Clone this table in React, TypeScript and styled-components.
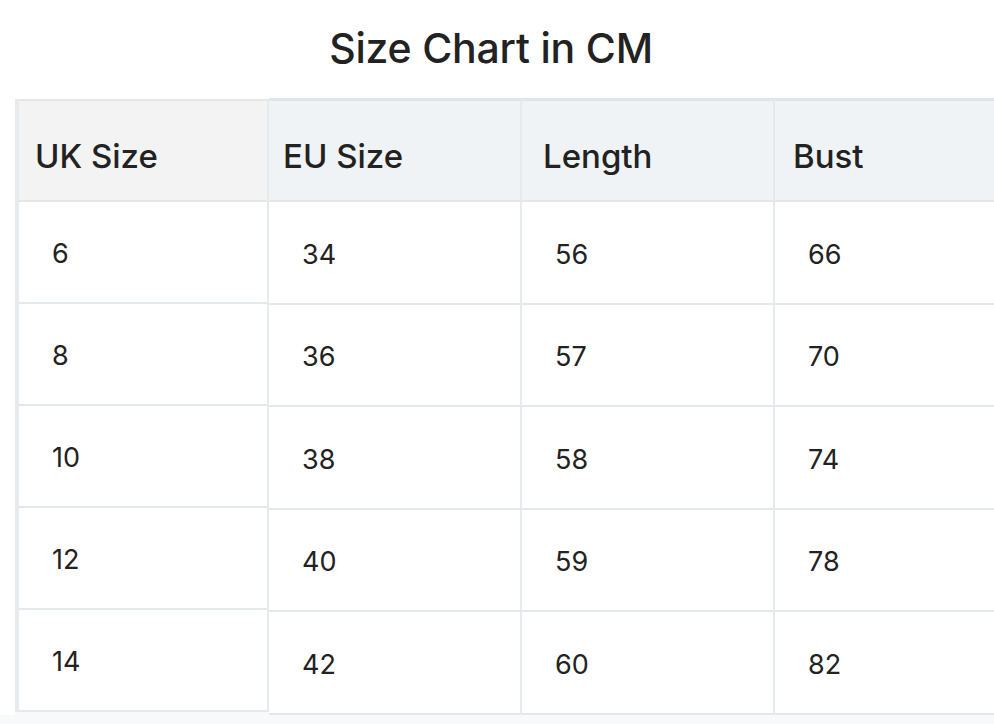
import React from "react";
import styled, { createGlobalStyle } from "styled-components";

const Global = createGlobalStyle`
  html, body { margin: 0; padding: 0; background: #ffffff; }
  body { font-family: Inter, "Liberation Sans", sans-serif; color: #222222; overflow: hidden; }
`;

const Page = styled.div`
  width: 994px;
  height: 724px;
  overflow: hidden;
  display: flex;
  flex-direction: column;
  background: #ffffff;
`;

const Title = styled.h1`
  margin: 0;
  padding: 26px 12px 0 0;
  height: 99px;
  flex-shrink: 0;
  box-sizing: border-box;
  text-align: center;
  font-size: 41px;
  line-height: 44px;
  font-weight: 500;
  color: #222222;
  letter-spacing: -0.2px;
`;

const Tables = styled.div`
  display: flex;
  margin-left: 15px;
  width: 1100px;
  flex-shrink: 0;
  background: #f8f9fa;
`;

const Rest = styled.div`
  flex: 1;
  background: #f8f9fa;
`;

const FirstTable = styled.div`
  display: grid;
  grid-template-columns: 250px;
  grid-template-rows: 103px repeat(5, 102px);
  border-left: 4px solid #e7ebee;
  align-self: flex-start;
`;

const MainTable = styled.div`
  display: grid;
  grid-template-columns: 253px 253px 253px;
  grid-template-rows: 103px 103px 102px 103px 102px 103px;
  border-top: 1px solid #e1e5e8;
  margin-top: -1px;
`;

const HeadCell = styled.div<{ $tone: "grey" | "blue"; $pad: number }>`
  display: flex;
  align-items: center;
  padding-left: ${(p) => p.$pad}px;
  padding-top: 10px;
  background: ${(p) => (p.$tone === "grey" ? "#f3f3f3" : "#f0f3f5")};
  border-top: 2px solid ${(p) => (p.$tone === "grey" ? "#e6e6e6" : "#e1e5e8")};
  border-bottom: 2px solid #e4e6e8;
  border-right: 2px solid #e6eaed;
  box-sizing: border-box;
  font-size: 33px;
  font-weight: 500;
  color: #222222;
`;

const BodyCell = styled.div<{ $pad: number }>`
  display: flex;
  align-items: center;
  padding-left: ${(p) => p.$pad}px;
  padding-top: 3px;
  background: #ffffff;
  border-bottom: 2px solid #e5e8eb;
  border-right: 2px solid #e8ebee;
  box-sizing: border-box;
  font-size: 27px;
  font-weight: 400;
  color: #222222;
`;

const rows = [
  ["6", "34", "56", "66"],
  ["8", "36", "57", "70"],
  ["10", "38", "58", "74"],
  ["12", "40", "59", "78"],
  ["14", "42", "60", "82"],
];

const heads = ["EU Size", "Length", "Bust"];
const headPads = [14, 21, 18];

export default function App() {
  return (
    <Page>
      <Global />
      <Title>Size Chart in CM</Title>
      <Tables>
        <FirstTable>
          <HeadCell $tone="grey" $pad={16}>UK Size</HeadCell>
          {rows.map((r) => (
            <BodyCell key={r[0]} $pad={33}>{r[0]}</BodyCell>
          ))}
        </FirstTable>
        <MainTable>
          {heads.map((h, i) => (
            <HeadCell key={h} $tone="blue" $pad={headPads[i]}>{h}</HeadCell>
          ))}
          {rows.map((r) =>
            r.slice(1).map((v, i) => (
              <BodyCell key={r[0] + "-" + i} $pad={33}>{v}</BodyCell>
            ))
          )}
        </MainTable>
      </Tables>
      <Rest />
    </Page>
  );
}
